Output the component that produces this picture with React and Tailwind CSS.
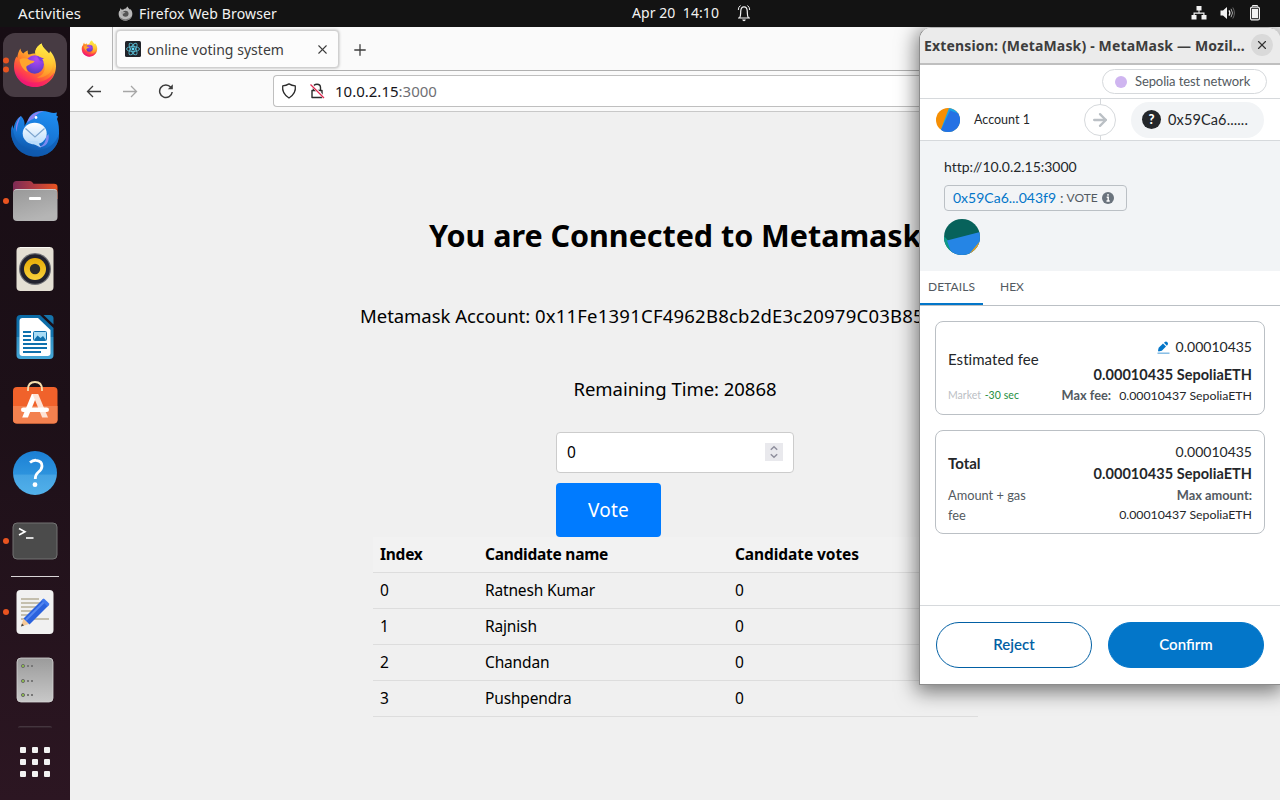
import { ArrowRight, X, Plus } from "lucide-react";

function FirefoxLogo({ className }) {
  return (
    <svg viewBox="13 10 44 46" className={className}>
      <defs>
        <linearGradient id="ffBody" x1="0.85" y1="0.1" x2="0.3" y2="1">
          <stop offset="0" stopColor="#fff44f" />
          <stop offset="0.3" stopColor="#ffb52e" />
          <stop offset="0.55" stopColor="#ff7a2a" />
          <stop offset="0.8" stopColor="#ff3a50" />
          <stop offset="1" stopColor="#e31587" />
        </linearGradient>
        <linearGradient id="ffTail" x1="0.6" y1="0" x2="0.5" y2="1">
          <stop offset="0" stopColor="#fff04a" />
          <stop offset="0.55" stopColor="#ffc832" />
          <stop offset="1" stopColor="#ff8a2b" />
        </linearGradient>
        <radialGradient id="ffGlobe" cx="0.6" cy="0.2" r="0.9">
          <stop offset="0" stopColor="#b24bf0" />
          <stop offset="0.5" stopColor="#8440e0" />
          <stop offset="1" stopColor="#4a3cb5" />
        </radialGradient>
      </defs>
      <path fill="url(#ffBody)" d="M20.5 16.5C20.6 19 22 20.6 23.4 21.6C24.500 20.2 26 19 27.800 18.500C27.600 20 27.800 21.500 28.500 22.500C31 22 33 21.500 35.300 21.500C35.300 17.500 37.500 13.500 41.6 11.4C42.3 15.8 46.8 18 49 21.500C49.6 20.8 50 20 50 19C53.8 23 56 28.500 56 34C56 46 46.500 55 35 55C23.500 55 14 46 14 34.500C14 30 15.200 26.500 16.500 24.500C16.800 25 17 25.500 17.200 26C17.700 22.500 18.600 18.800 20.500 16.500Z" />
      <path fill="url(#ffTail)" d="M41.600 11.400C42.300 15.800 46.800 18 50 23C53.500 29 53.800 34 51 39C48 43.500 42 46.500 37 45.500C43 43.500 45.500 38.500 44.500 33.500C43.800 28.500 40.500 26.500 38 24.500C35.500 22.500 34.700 20.500 35.200 19C36 15.800 38.300 13 41.600 11.400Z" />
      <circle cx="34.700" cy="32.500" r="9.200" fill="url(#ffGlobe)" />
      <path fill="#7a3ee0" d="M37 24L44 26.500L42 27.500L43.500 29.500L40 29Z" />
      <path fill="#ffa52e" d="M19.500 27.500C23 25.500 27 26.300 30 28.200L34.500 29C34.300 30.500 32.500 31.200 30.500 31.700C30 32.300 28 33.300 26.500 34.200C26 36 26.500 38 28 40C23.500 38.500 20 33 19.500 27.500Z" />
      <path fill="#f5156c" opacity="0.6" d="M15 40C19 47.500 27 51 36 50.500C44 50 51 46 54.500 40C52 49 44.500 55 35 55C25.500 55 17.500 49 15 40Z" />
    </svg>
  );
}

function Running({ cy }) {
  return <circle cx="6" cy={cy} r="3" fill="#e95420" />;
}

function DockCell({ children, className = "h-[68px]" }) {
  return <svg className={"w-[70px] shrink-0 " + className} viewBox="0 0 70 68">{children}</svg>;
}

function Dock() {
  return (
    <nav className="flex h-full w-[70px] shrink-0 flex-col bg-linear-to-b from-[#170d14] via-[#1d1018] to-[#2c1622] pt-1">
      <div className="flex h-[68px] shrink-0 items-center pl-[3px]">
        <div className="flex size-16 items-center justify-center rounded-xl bg-[#473b43]">
          <FirefoxLogo className="h-[46px] w-11" />
        </div>
        <svg className="absolute left-0 h-[68px] w-3" viewBox="0 0 12 68"><Running cy="29.500" /><Running cy="38.500" /></svg>
      </div>
      <DockCell>
        <defs>
          <linearGradient id="tb" x1="0.7" y1="0" x2="0.4" y2="1"><stop offset="0" stopColor="#1f8df0" /><stop offset="0.6" stopColor="#1674d3" /><stop offset="1" stopColor="#0d4f9e" /></linearGradient>
          <linearGradient id="env" x1="0" y1="0" x2="0" y2="1"><stop offset="0" stopColor="#fff" /><stop offset="1" stopColor="#b9dcfb" /></linearGradient>
        </defs>
        <path fill="url(#tb)" d="M21 17C24 20 25 23 24.500 27L28 21C30 15 36 12 42 12C47 12 51 14 54 14L57 13.500L56.300 16.500L58 17.500L57 20C59 25 59 29 59 35C59 48 49 57.500 36 57.500C22 57.500 11 47 11 32C11 30 11.500 28 12.500 26L13.500 30C14.500 24 17 19 21 17Z" />
        <path fill="#0f5bb0" d="M13 30C14 40 20 49 32 51C46 53 56 45 59 35C59 48 49 57.500 36 57.500C22 57.500 11 47 11 32Z" opacity="0.7" />
        <path fill="#8a83f2" d="M21 17C17 21 15 27 16.500 33C17 27 18.500 22 21 17Z" />
        <path fill="#8a83f2" d="M27 24C29 16 36 12 44 12C38 14 35 16.500 33.500 20C31 20.500 29 22 27 24Z" />
        <circle cx="36" cy="18.500" r="1.400" fill="#fff" />
        <path fill="#7c8af0" d="M46 38C46 44 42 48 37 48C45 49 50 44 48.500 35Z" />
        <ellipse cx="34.700" cy="34.500" rx="12" ry="10.800" fill="url(#env)" />
        <path fill="#b9dcfb" d="M27 42L41 48.500L37.500 42Z" />
        <path d="M25.500 29.500L35 38L44.500 29.500" fill="none" stroke="#7da6cf" strokeWidth="1.200" />
      </DockCell>
      <DockCell>
        <defs>
          <linearGradient id="fold" x1="0" x2="1"><stop offset="0" stopColor="#7c2b55" /><stop offset="0.5" stopColor="#b33d42" /><stop offset="1" stopColor="#e95420" /></linearGradient>
          <linearGradient id="grey" x1="0" y1="0" x2="0.4" y2="1"><stop offset="0" stopColor="#989898" /><stop offset="1" stopColor="#b5b5b5" /></linearGradient>
        </defs>
        <Running cy="34" />
        <path fill="url(#fold)" d="M13 17.500Q13 14 16.500 14H30Q32 14 33.500 16.700H54Q57.500 16.700 57.500 20V32H13Z" />
        <rect x="13" y="22" width="44.500" height="32" rx="4" fill="url(#grey)" />
        <path d="M14.500 23.500Q15 22.500 17 22.500H53.500Q55.500 22.500 56.500 23.500" fill="none" stroke="#cfcfcf" />
        <rect x="29" y="30" width="12" height="3" rx="1" fill="#fff" />
      </DockCell>
      <DockCell>
        <defs><linearGradient id="cone" x1="0" y1="0" x2="0" y2="1"><stop offset="0" stopColor="#e5aa05" /><stop offset="1" stopColor="#fad23c" /></linearGradient></defs>
        <rect x="16.500" y="12" width="37" height="44" rx="4" fill="#e4dfd4" />
        <path d="M20 12.500H50" stroke="#faf8f3" />
        <circle cx="35" cy="34" r="16" fill="#6f6f74" />
        <circle cx="35" cy="34" r="14.800" fill="#22222e" />
        <circle cx="35" cy="34" r="11" fill="url(#cone)" />
        <circle cx="35" cy="34" r="5.200" fill="#2b2b2b" />
      </DockCell>
      <DockCell>
        <defs><linearGradient id="wr" x1="0" y1="0" x2="0" y2="1"><stop offset="0" stopColor="#0b6ba6" /><stop offset="0.49" stopColor="#1273ae" /><stop offset="0.5" stopColor="#2f90c4" /><stop offset="1" stopColor="#45a6d6" /></linearGradient></defs>
        <path fill="url(#wr)" d="M20.500 12H40L53.500 25V52Q53.500 56 49.500 56H20.500Q16.500 56 16.500 52V16Q16.500 12 20.500 12Z" />
        <path fill="#1674ab" d="M43.500 12H50Q53.500 12 53.500 15.500V21.500Z" />
        <path fill="#fff" d="M22.500 15H38L50.500 27V50Q50.500 53 47.500 53H22.500Q19.500 53 19.500 50V18Q19.500 15 22.500 15Z" />
        <path d="M23 29H31M23 33H31M23 37H31M23 41H47M23 45H47M23 49H41" stroke="#1071ad" strokeWidth="2" />
        <rect x="33.500" y="28.500" width="13" height="9" rx="1" fill="#a9dcf5" stroke="#1071ad" />
        <path d="M34 37L37.500 32.500L40.500 35L43 33L46 37Z" fill="#1071ad" />
      </DockCell>
      <DockCell>
        <rect x="13" y="16" width="44.500" height="36.500" rx="4" fill="#f0622b" />
        <path d="M13 35H57.500V48.500Q57.500 52.500 53.500 52.500H17Q13 52.500 13 48.500Z" fill="#f3814f" />
        <path d="M28 20V18.500Q28 11 35 11T42 18.500V20" fill="none" stroke="#f7dfae" strokeWidth="1.800" />
        <path d="M22.200 46.500L31.800 23H37.500L27.900 46.500Z" fill="#fff" />
        <path d="M32.500 23H38.200L48 46.500H42.200Z" fill="#fde3d7" />
        <rect x="21" y="36.500" width="28" height="4.600" rx="2.300" fill="#fff" />
      </DockCell>
      <DockCell>
        <defs><linearGradient id="help" x1="0" y1="0" x2="0" y2="1"><stop offset="0" stopColor="#1b7fd4" /><stop offset="0.53" stopColor="#2d93dd" /><stop offset="0.54" stopColor="#45a3e3" /><stop offset="1" stopColor="#52b1ea" /></linearGradient></defs>
        <circle cx="35" cy="34" r="22" fill="url(#help)" />
        <path d="M30 23.500Q33 21 36 21.300Q42 21.700 42 27Q42 30.500 38 33.500Q35.300 35.700 35.300 40" fill="none" stroke="#fff" strokeWidth="2.800" />
        <circle cx="35" cy="45.700" r="2.400" fill="#fff" />
      </DockCell>
      <DockCell>
        <Running cy="34" />
        <rect x="13" y="16" width="44" height="36" rx="4" fill="#4b4b4b" stroke="#737373" />
        <path d="M19 21.500L25 24.700L19 28" fill="none" stroke="#fff" strokeWidth="1.600" />
        <path d="M26 31H33.500" stroke="#fff" strokeWidth="1.600" />
      </DockCell>
      <div className="mx-[11px] mb-px h-0.5 shrink-0 translate-y-px border-t border-[#d9d5d7]" />
      <DockCell>
        <Running cy="34" />
        <rect x="16.500" y="12" width="37" height="44" rx="4" fill="#f1f1f1" />
        <path d="M21 21H39M21 25H44M21 29H38M21 33H34M21 37H38M21 41H49" stroke="#c4bfae" strokeWidth="2" />
        <path d="M21 48.500L23.500 40.500L29 46Z" fill="#f6c998" />
        <path d="M21 48.500L22 45.500L24 47.500Z" fill="#444" />
        <path d="M23.500 40.500L43 21L49 27L29.500 46.500Z" fill="#2b62dd" />
        <path d="M26 42L45 23" stroke="#5587f0" strokeWidth="2" />
        <path d="M41.500 22.500L43.500 20.500Q45 21 49.500 26L47.500 28.500Z" fill="#3f78ee" />
      </DockCell>
      <DockCell>
        <defs><linearGradient id="srv" x1="0" y1="0" x2="0" y2="1"><stop offset="0" stopColor="#9b9b9b" /><stop offset="1" stopColor="#c8c8c8" /></linearGradient></defs>
        <rect x="17" y="12" width="36" height="44" rx="4" fill="url(#srv)" stroke="#d5d5d5" strokeWidth="0.800" />
        {[20, 35, 49].map((y) => (
          <g key={y}>
            <circle cx="23" cy={y} r="1.600" fill="#8fc04c" stroke="#6d6d6d" />
            <rect x="27" y={y - 1} width="2" height="2" fill="#777" />
            <rect x="31" y={y - 1} width="2" height="2" fill="#777" />
          </g>
        ))}
      </DockCell>
      <div className="mt-3 ml-[18px] h-0.5 w-[34px] shrink-0 rounded-t-sm border-t border-[#44353e] bg-[#33232c]" />
      <div className="mt-[19px] ml-5 grid w-[30px] shrink-0 grid-cols-3 gap-1.5">
        {Array.from({ length: 9 }, (_, i) => <span key={i} className="size-1.5 rounded-[1px] bg-[#f2f2f2]" />)}
      </div>
    </nav>
  );
}

function TopBar() {
  return (
    <header className="flex h-[27px] shrink-0 items-center bg-[#131313] text-[14px] leading-none text-[#f2f2f2]">
      <span className="ml-[18px] w-[100px] text-[15px] tracking-[0.05px]">Activities</span>
      <svg viewBox="13 10 44 46" className="h-[15px] w-[15px]">
        <path fill="#b9b9b9" d="M20.500 16.500C21 19 22 20.600 23.400 21.600L29 21C31 18.400 34 17.600 36.600 17.600C37.500 14.600 39.300 12.400 41.600 11.400C42.300 15.800 46.800 18 49 21.500L50 19C53.800 23 56 28.500 56 34C56 46 46.500 55 35 55C23.500 55 14 46 14 34.500C14 30 15.200 26.500 16.500 24.500L17.200 26C17.700 22.500 18.600 18.800 20.500 16.500Z" />
        <circle cx="35" cy="33.500" r="9.300" fill="#555" />
        <path fill="#777" d="M15 40C19 47.500 27 51 36 50.500C44 50 51 46 54.500 40C52 49 44.500 55 35 55C25.500 55 17.500 49 15 40Z" />
        <path fill="#a5a5a5" d="M20 28C23 26 27 26.500 30 28.500L35 29C34 31.500 28 33 26.500 34.200L27 39C23.500 36.500 21 32 20 28Z" />
      </svg>
      <span className="ml-1.5 w-[493px] tracking-[0.137px]">Firefox Web Browser</span>
      <span className="-mt-px w-[105px] whitespace-pre tracking-[0.072px]">Apr 20  14:10</span>
      <svg className="-mt-0.5 h-[18px] w-[14px]" viewBox="0 0 14 18" fill="none" stroke="#f2f2f2">
        <path d="M1 14H13M2.500 14C3.800 12.500 3.600 11 3.700 7.500C3.800 4.500 5 2.800 7 2.800S10.200 4.500 10.300 7.500C10.400 11 10.200 12.500 11.500 14" strokeWidth="1.200" />
        <path d="M3.500 1.500Q1.300 3 1.300 6M10.500 1.500Q12.700 3 12.700 6" />
        <path d="M5.200 15.500H8.800Q8.500 17.200 7 17.200T5.200 15.500Z" fill="#f2f2f2" stroke="none" />
      </svg>
      <svg className="ml-auto h-4 w-4 -translate-y-px" viewBox="0 0 16 16" fill="#f2f2f2">
        <path d="M5.500 1H10.500V5.500H8.500V7.500H13.500V10H15.500V14.500H10.500V10H12.300V8.700H3.700V10H5.500V14.500H0.500V10H2.500V7.500H7.500V5.500H5.500Z" />
      </svg>
      <svg className="ml-[13px] h-4 w-4 -translate-y-px" viewBox="0 0 16 16" fill="#f2f2f2">
        <path d="M0.500 5.500H3L7 2V14L3 10.500H0.500Z" />
        <path d="M9 5.300Q10.800 8 9 10.700" fill="none" stroke="#f2f2f2" strokeWidth="1.200" />
        <path d="M11 3.800Q14 8 11 12.200" fill="none" stroke="#aaa" />
        <path d="M12.800 2.500Q16 8 12.800 13.500" fill="none" stroke="#666" />
      </svg>
      <svg className="mr-[19px] ml-[13px] h-4 w-[12px] -translate-y-px" viewBox="0 0 12 16">
        <path d="M3.500 1.500V0.500H8.500V1.500" stroke="#f2f2f2" fill="none" />
        <rect x="1.600" y="2.100" width="8.800" height="12.800" rx="1.500" fill="none" stroke="#f2f2f2" strokeWidth="1.200" />
        <rect x="3" y="3.800" width="6" height="9.400" fill="#f2f2f2" />
      </svg>
    </header>
  );
}

function BrowserChrome() {
  return (
    <>
      <div className="flex h-11 shrink-0 border-b border-[#b0b0b0] bg-[#fafafa]">
        <div className="flex w-[43px] items-center justify-center border-r border-[#b5b5b5] pr-[3px]">
          <FirefoxLogo className="h-[17px] w-[17px]" />
        </div>
        <div className="mt-[3px] ml-[3px] flex h-[38px] w-[223px] items-center rounded-[4px] border border-[#d0d0d0] bg-[#fcfcfc] pl-2 shadow-[0_0_3px_rgba(0,0,0,0.3)]">
          <svg viewBox="0 0 16 16" className="size-4">
            <rect width="16" height="16" rx="1.500" fill="#20232a" />
            <g fill="none" stroke="#57b8cf" strokeWidth="0.900">
              <ellipse cx="8" cy="8" rx="6.500" ry="2.500" />
              <ellipse cx="8" cy="8" rx="6.500" ry="2.500" transform="rotate(60 8 8)" />
              <ellipse cx="8" cy="8" rx="6.500" ry="2.500" transform="rotate(120 8 8)" />
            </g>
            <circle cx="8" cy="8" r="1.400" fill="#61dafb" />
          </svg>
          <span className="mt-px ml-1.5 flex-1 text-[14px] leading-none tracking-[0.036px] text-[#3d3d3d]">online voting system</span>
          <X className="mr-2 size-[15px] text-[#3d3d3d]" strokeWidth={1.7} />
        </div>
        <Plus className="mt-[14px] ml-3 size-[18px] text-[#3d3d3d]" strokeWidth={1.7} />
      </div>
      <div className="flex h-[41px] shrink-0 items-center border-b border-[#c8c8c8] bg-[#fafafa]">
        <svg className="ml-4 h-4 w-4" viewBox="0 0 16 16" fill="none" stroke="#3d3d3d" strokeWidth="1.300"><path d="M15 8.500H1.500M7 3L1.500 8.500L7 14" /></svg>
        <svg className="ml-5 h-4 w-4" viewBox="0 0 16 16" fill="none" stroke="#a6a6a6" strokeWidth="1.300"><path d="M1 8.500H14.500M9 3L14.500 8.500L9 14" /></svg>
        <svg className="ml-5 h-4 w-4" viewBox="0 0 16 16" fill="none" stroke="#3d3d3d" strokeWidth="1.500"><path d="M14.200 9A6.300 6.300 0 1 1 12.800 4.200" /><path d="M14.800 1.200V6.200H9.800Z" fill="#3d3d3d" stroke="none" /></svg>
        <div className="ml-[99px] flex h-8 flex-1 items-center rounded-l-[4px] border border-r-0 border-[#bfbfbf] bg-white">
          <svg className="ml-[7px] h-4 w-4" viewBox="0 0 16 16" fill="none" stroke="#2b2b2b" strokeWidth="1.300"><path d="M8 0.900Q10.800 2.700 14.300 2.900Q15.300 10.500 8 15Q0.700 10.500 1.700 2.900Q5.200 2.700 8 0.900Z" strokeLinejoin="round" /></svg>
          <svg className="ml-3 h-4 w-4" viewBox="0 0 16 16" fill="none"><path d="M4.500 7V4.500Q4.500 1.200 8 1.200T11.500 4.500V7M3 7.500H13V14.500H3Z" stroke="#2b2b2b" strokeWidth="1.400" strokeLinejoin="round" /><path d="M2 1.500L15.500 15" stroke="#fff" strokeWidth="2.500" /><path d="M1.500 1.500L15 15" stroke="#e22850" strokeWidth="1.300" /></svg>
          <span className="ml-[10px] text-[15px] leading-none text-[#6f6f74]"><span className="text-[#15141a]">10.0.2.15</span>:3000</span>
        </div>
      </div>
    </>
  );
}

const candidates = ["Ratnesh Kumar", "Rajnish", "Chandan", "Pushpendra"];

function VotingPage() {
  return (
    <main className="flex-1 bg-[#f0f0f0] text-black whitespace-nowrap">
      <h1 className="mt-[103px] ml-[359px] h-[40px] text-[30.500px] leading-[40px] font-bold tracking-[-0.040px]">You are Connected to Metamask</h1>
      <p className="mt-[46px] ml-[290px] h-[30px] text-[18.500px] leading-[30px] tracking-[0.220px]"><span className="tracking-[-0.040px]">Metamask Account: </span>0x11Fe1391CF4962B8cb2dE3c20979C03B85</p>
      <p className="mt-[43px] h-[30px] text-center text-[18.500px] leading-[30px] tracking-[-0.030px]">Remaining Time: 20868</p>
      <div className="mt-[28px] ml-[486px] flex h-[41px] w-[238px] items-center justify-between rounded-[4px] border border-[#cccccc] bg-white pr-[10px] pl-[10px]">
        <span className="text-[15.500px] leading-none">0</span>
        <svg className="h-[18px] w-[18px] -translate-y-px bg-[#e9e9ed]" viewBox="0 0 18 18" fill="none" stroke="#8f8f9d" strokeWidth="1.500"><path d="M5.800 6.700L9 3.700L12.200 6.700M5.800 11.300L9 14.300L12.200 11.300" /></svg>
      </div>
      <button className="mt-[10px] ml-[486px] block h-[54px] w-[105px] rounded-[4px] bg-[#007bff] text-[19px] tracking-[0.200px] text-white">Vote</button>
      <table className="ml-[303px] w-[605px] table-fixed border-collapse text-left text-[15.500px]">
        <colgroup><col className="w-[105px]" /><col className="w-[250px]" /><col className="w-[250px]" /></colgroup>
        <thead>
          <tr className="h-[35px] border-b border-[#dddddd] bg-[#f2f2f2] tracking-[-0.250px]">
            <th className="px-[7px] pt-px pb-0">Index</th><th className="px-[7px] pt-px pb-0">Candidate name</th><th className="px-[7px] pt-px pb-0 tracking-[-0.080px]">Candidate votes</th>
          </tr>
        </thead>
        <tbody>
          {candidates.map((name, i) => (
            <tr key={name} className="h-9 border-b border-[#dddddd]">
              <td className="px-[7px] pt-px pb-0">{i}</td><td className="px-[7px] pt-px pb-0 tracking-[-0.160px]">{name}</td><td className="px-[7px] pt-px pb-0">0</td>
            </tr>
          ))}
        </tbody>
      </table>
    </main>
  );
}

function FeeCard({ className, children }) {
  return <section className={"mx-[15px] flex justify-between rounded-lg border border-[#bbc0c5] px-3 " + className}>{children}</section>;
}

function MetaMaskWindow() {
  return (
    <aside className="absolute top-[27px] right-0 flex h-[658px] w-[361px] flex-col overflow-hidden rounded-t-[12px] border border-r-0 border-[#8c8c8c] border-t-[#b5b5b5] bg-white font-['Lato',sans-serif] whitespace-nowrap text-[#24272a]">
      <div className="flex h-[37px] shrink-0 items-center justify-between border-b-2 border-[#bfbfbf] bg-[#ebebeb] pr-[7px] pl-1">
        <span className="font-['Noto_Sans',sans-serif] text-[14px] font-bold tracking-[0.163px] text-[#3d3d3d]">Extension: (MetaMask) - MetaMask — Mozil…</span>
        <span className="flex size-[22px] shrink-0 -translate-y-px items-center justify-center rounded-full bg-[#d9d9d9]"><X className="size-[14px] text-[#333]" strokeWidth={2} /></span>
      </div>
      <div className="flex h-[34px] shrink-0 items-center justify-end border-b border-[#d6d9dc] pr-[13px]">
        <div className="flex h-[25px] w-[165px] items-center rounded-full border border-[#d6d9dc] pl-3">
          <span className="size-3 rounded-full bg-[#cfb5f0]" />
          <span className="ml-2 text-[13px] leading-none tracking-[-0.100px] text-[#535a61]">Sepolia test network</span>
        </div>
      </div>
      <div className="flex h-[42px] shrink-0 items-center border-b border-[#d6d9dc] pl-4">
        <svg viewBox="0 0 24 24" className="size-6"><clipPath id="acc"><circle cx="12" cy="12" r="12" /></clipPath><g clipPath="url(#acc)"><rect width="24" height="24" fill="#f58f05" /><path d="M13 0L4 24H24V0Z" fill="#18a5e8" /><path d="M14 2.500L5 22L6 24H24V6Z" fill="#2472e4" /></g></svg>
        <span className="mt-px ml-[14px] w-[110px] text-[12.500px]">Account 1</span>
        <div className="flex h-full w-8 flex-col items-center">
          <span className="w-px flex-1 bg-[#d6d9dc]" />
          <span className="flex size-8 items-center justify-center rounded-full border border-[#d6d9dc]"><ArrowRight className="size-5 text-[#bbc0c5]" strokeWidth={2.800} /></span>
          <span className="w-px flex-1 bg-[#d6d9dc]" />
        </div>
        <div className="ml-[15px] flex h-9 w-[133px] items-center rounded-full bg-[#f2f4f6] pl-[11px]">
          <span className="flex size-[19px] items-center justify-center rounded-full bg-[#24272a] text-[13px] leading-none font-black text-white">?</span>
          <span className="mt-px ml-[7px] text-[14.500px] tracking-[0.130px]">0x59Ca6......</span>
        </div>
      </div>
      <div className="flex h-[130px] shrink-0 flex-col items-start bg-[#f2f4f6] pt-[15px] pl-6">
        <span className="h-[22px] text-[14px] leading-[22px] tracking-[-0.030px]">http://10.0.2.15:3000</span>
        <div className="mt-[7px] flex h-[26px] w-[183px] items-center rounded-[4px] border border-[#bbc0c5] pl-2 leading-none text-[#535a61]">
          <span className="text-[14px] text-[#0376c9]">0x59Ca6...043f9</span>
          <span className="ml-1 text-[14px]">:</span>
          <span className="ml-[3px] text-[12px]">VOTE</span>
          <svg className="-mt-px ml-1 size-3" viewBox="0 0 12 12"><circle cx="6" cy="6" r="6" fill="#6a737d" /><path d="M6 2V3.700M4.700 5.200H6.200V9M4.500 9H7.700" stroke="#fff" strokeWidth="1.400" fill="none" /></svg>
        </div>
        <svg viewBox="0 0 36 36" className="mt-2 size-9"><clipPath id="dst"><circle cx="18" cy="18" r="18" /></clipPath><g clipPath="url(#dst)"><rect width="36" height="36" fill="#07625b" /><path d="M0 17L4 21.500L10 36H0Z" fill="#0d9a88" /><path d="M3 21.500L36 13V36H8Z" fill="#2585e5" /><path d="M37 21L24 36.500H37Z" fill="#f0a30f" /></g></svg>
      </div>
      <div className="flex h-[35px] shrink-0 border-b border-[#bbc0c5] text-[12px] leading-[32px] text-[#535a61]">
        <span className="h-[34px] w-[63px] border-b-2 border-[#0376c9] pl-2 tracking-[0.076px]">DETAILS</span>
        <span className="pl-[17px]">HEX</span>
      </div>
      <FeeCard className="mt-[15px] h-[94px] shrink-0">
        <div className="flex flex-col">
          <span className="mt-[26px] h-[22px] text-[15px] leading-[22px] tracking-[0.050px]">Estimated fee</span>
          <span className="mt-[14px] text-[10.500px] leading-[22px] text-[#bbc0c5]">Market <span className="ml-px tracking-[0.080px] text-[#1e8e3e]">-30 sec</span></span>
        </div>
        <div className="flex flex-col items-end">
          <div className="mt-[13px] flex h-[22px] items-center gap-1.5 text-[14px]">
            <svg className="mt-0.5 h-[13px] w-[13px]" viewBox="0 0 13 13"><path d="M1 9.500L1.700 6.700L6 2.500L9 5.500L4.800 9.800L1.500 10.500Z" fill="#0376c9" /><path d="M7 1.700L7.800 0.900Q9 0 10.200 1Q11.600 2.300 10.700 3.700L9.800 4.700Z" fill="#0376c9" /><path d="M0.500 12.200H12.500" stroke="#7db8e4" strokeWidth="1.400" /></svg>
            0.00010435
          </div>
          <span className="mt-[7px] h-[22px] text-[14.500px] leading-[22px] font-bold tracking-[0.040px]">0.00010435 SepoliaETH</span>
          <span className="-mt-px h-[20px] text-[12.300px] leading-[20px]"><b className="mr-[8px] text-[12.800px] text-[#535a61]">Max fee:</b>0.00010437 SepoliaETH</span>
        </div>
      </FeeCard>
      <FeeCard className="mt-[15px] h-[104px] shrink-0">
        <div className="flex w-[90px] flex-col">
          <span className="mt-[21px] h-[22px] text-[15px] leading-[22px] font-bold">Total</span>
          <span className="mt-[11px] text-[12.800px] leading-[20px] whitespace-normal text-[#535a61]">Amount + gas fee</span>
        </div>
        <div className="flex flex-col items-end">
          <span className="mt-[10px] h-[22px] text-[14px] leading-[22px]">0.00010435</span>
          <span className="h-[22px] text-[14.500px] leading-[22px] font-bold tracking-[0.040px]">0.00010435 SepoliaETH</span>
          <b className="h-[20px] text-[12.800px] leading-[20px] text-[#535a61]">Max amount:</b>
          <span className="h-[20px] text-[12.300px] leading-[20px]">0.00010437 SepoliaETH</span>
        </div>
      </FeeCard>
      <footer className="mt-auto flex h-[79px] shrink-0 gap-4 border-t border-[#d6d9dc] px-4 pt-4 text-[15px]">
        <button className="h-[46px] flex-1 rounded-full border border-[#0260a4] pb-0.5 font-semibold text-[#0260a4]">Reject</button>
        <button className="h-[46px] flex-1 rounded-full border border-[#0376c9] bg-[#0376c9] pb-0.5 font-semibold text-white">Confirm</button>
      </footer>
    </aside>
  );
}

export default function App() {
  return (
    <div className="relative flex h-[800px] w-[1280px] flex-col overflow-hidden bg-[#f0f0f0] font-['Noto_Sans',sans-serif]">
      <TopBar />
      <div className="relative flex min-h-0 flex-1">
        <Dock />
        <div className="flex min-w-0 flex-1 flex-col">
          <BrowserChrome />
          <VotingPage />
        </div>
      </div>
      <div className="absolute top-[27px] right-0 bottom-0 w-[420px] overflow-hidden">
        <div className="absolute top-0 right-0 h-[658px] w-[361px] rounded-t-[12px] shadow-[0_4px_20px_3px_rgba(0,0,0,0.5)]" />
      </div>
      <MetaMaskWindow />
    </div>
  );
}
